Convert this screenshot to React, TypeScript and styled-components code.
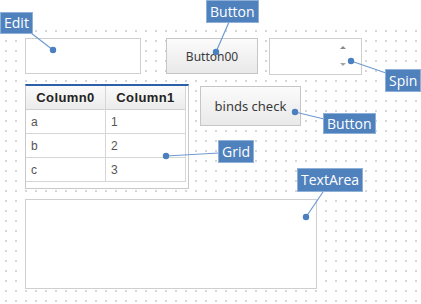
import { Fragment } from "react";
import styled, { createGlobalStyle } from "styled-components";

const GlobalStyle = createGlobalStyle`
  html, body {
    margin: 0;
    padding: 0;
    background: #ffffff;
  }
`;

// whole design surface, widgets and callouts are placed on it by coordinate
const Stage = styled.div`
  position: relative;
  width: 421px;
  height: 304px;
  overflow: hidden;
  background: #ffffff;
  font-family: "Liberation Sans", Arial, sans-serif;
`;

const DotGrid = styled.div`
  position: absolute;
  left: 0;
  top: 26px;
  right: 0;
  bottom: 0;
  background-image: radial-gradient(circle, #a8a8a8 0.55px, transparent 0.85px);
  background-size: 10px 10px;
  background-position: 1px 0px;
`;

const Widget = styled.div<{ $x: number; $y: number; $w: number; $h: number }>`
  position: absolute;
  left: ${({ $x }) => $x}px;
  top: ${({ $y }) => $y}px;
  width: ${({ $w }) => $w}px;
  height: ${({ $h }) => $h}px;
  box-sizing: border-box;
`;

const EditBox = styled(Widget)`
  border: 1px solid #cfcfcf;
  background: #ffffff;
`;

const PushButton = styled(Widget)<{ $size?: number }>`
  display: flex;
  align-items: center;
  justify-content: center;
  border: 1px solid #c6c6c6;
  background: linear-gradient(#fbfbfb, #e9e9e9);
  color: #3a3a3a;
  font-family: "Noto Sans", "Open Sans", sans-serif;
  font-size: ${({ $size }) => $size ?? 12}px;
`;

const SpinBox = styled(Widget)`
  display: flex;
  flex-direction: column;
  align-items: flex-end;
  justify-content: center;
  gap: 14px;
  padding-right: 15px;
  padding-bottom: 1px;
  border: 1px solid #cfcfcf;
  background: #ffffff;
`;

const Arrow = styled.span<{ $down?: boolean }>`
  width: 0;
  height: 0;
  border-left: 3px solid transparent;
  border-right: 3px solid transparent;
  ${({ $down }) =>
    $down ? "border-top: 3px solid #a6a6a6;" : "border-bottom: 3px solid #8a8a8a;"}
`;

const GridBox = styled(Widget)`
  border: 1px solid #c9c9c9;
  border-top: 2px solid #2b5fa8;
  background: #ffffff;
`;

const GridTable = styled.div`
  display: grid;
  grid-template-columns: 80px 80px;
`;

const HeadCell = styled.div`
  height: 24px;
  display: flex;
  align-items: center;
  justify-content: center;
  background: linear-gradient(#fafafa, #ececec);
  border-right: 1px solid #d6d6d6;
  border-bottom: 1px solid #d0d0d0;
  font-size: 13px;
  font-weight: bold;
  color: #222222;
  letter-spacing: 0.4px;
  box-sizing: border-box;
`;

const Cell = styled.div`
  height: 24px;
  display: flex;
  align-items: center;
  padding-left: 5px;
  border-right: 1px solid #d6d6d6;
  border-bottom: 1px solid #d6d6d6;
  font-size: 12px;
  color: #555555;
  box-sizing: border-box;
`;

const TextArea = styled(Widget)`
  border: 1px solid #cfcfcf;
  background: #ffffff;
`;

const Links = styled.svg`
  position: absolute;
  left: 0;
  top: 0;
  pointer-events: none;
`;

const Callout = styled.div<{ $x: number; $y: number; $h?: number }>`
  position: absolute;
  left: ${({ $x }) => $x}px;
  top: ${({ $y }) => $y}px;
  height: ${({ $h }) => $h ?? 22}px;
  box-sizing: border-box;
  display: flex;
  align-items: center;
  padding: 0 3px 1px;
  background: #4f81bd;
  border: 1px solid #8fb0d9;
  color: #ffffff;
  font-family: "Open Sans", "Noto Sans", sans-serif;
  font-size: 14px;
  white-space: nowrap;
`;

const rows = [
  ["a", "1"],
  ["b", "2"],
  ["c", "3"],
];

const links = [
  { x1: 31, y1: 33, x2: 53, y2: 50 },
  { x1: 229, y1: 22, x2: 216, y2: 52 },
  { x1: 386, y1: 73, x2: 351, y2: 61 },
  { x1: 324, y1: 119, x2: 295, y2: 112 },
  { x1: 219, y1: 153, x2: 166, y2: 156 },
  { x1: 323, y1: 192, x2: 306, y2: 217 },
];

export default function App() {
  return (
    <>
      <GlobalStyle />
      <Stage>
        <DotGrid />
        <EditBox $x={25} $y={38} $w={116} $h={36} />
        <PushButton $x={166} $y={38} $w={92} $h={36}>
          Button00
        </PushButton>
        <SpinBox $x={269} $y={38} $w={93} $h={37}>
          <Arrow />
          <Arrow $down />
        </SpinBox>
        <GridBox $x={25} $y={84} $w={164} $h={105}>
          <GridTable>
            <HeadCell>Column0</HeadCell>
            <HeadCell>Column1</HeadCell>
            {rows.map(([a, b]) => (
              <Fragment key={a}>
                <Cell>{a}</Cell>
                <Cell>{b}</Cell>
              </Fragment>
            ))}
          </GridTable>
        </GridBox>
        <PushButton $x={200} $y={86} $w={101} $h={40} $size={13}>
          binds check
        </PushButton>
        <TextArea $x={25} $y={199} $w={292} $h={90} />

        <Links width={421} height={304}>
          {links.map((l, i) => (
            <g key={i}>
              <line
                x1={l.x1}
                y1={l.y1}
                x2={l.x2}
                y2={l.y2}
                stroke="#6f9bd0"
                strokeWidth={1.2}
              />
              <circle cx={l.x2} cy={l.y2} r={3.2} fill="#4a7fc0" />
            </g>
          ))}
        </Links>

        <Callout $x={0} $y={12}>Edit</Callout>
        <Callout $x={206} $y={0} $h={23}>Button</Callout>
        <Callout $x={385} $y={69} $h={23}>Spin</Callout>
        <Callout $x={323} $y={113} $h={21}>Button</Callout>
        <Callout $x={218} $y={140} $h={23}>Grid</Callout>
        <Callout $x={297} $y={168} $h={24}>TextArea</Callout>
      </Stage>
    </>
  );
}
